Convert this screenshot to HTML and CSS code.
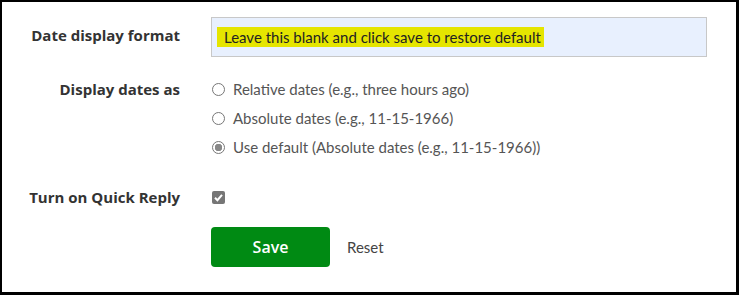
FILE: index.html
```html
<!DOCTYPE html>
<html lang="en">
<head>
    <meta charset="UTF-8">
    <meta name="viewport" content="width=device-width, initial-scale=1.0">
    <title>Preferences</title>
    <link rel="stylesheet" href="styles.css">
</head>
<body>
    <form class="prefs">
        <div class="row">
            <label class="row-label" for="dateformat">Date display format</label>
            <div class="row-field">
                <div class="text-input" id="dateformat"><span class="hint">Leave this blank and click save to restore default</span></div>
            </div>
        </div>
        <div class="row row-dates">
            <span class="row-label">Display dates as</span>
            <div class="row-field options">
                <label class="option"><input type="radio" name="dates"> Relative dates (e.g., three hours ago)</label>
                <label class="option"><input type="radio" name="dates"> Absolute dates (e.g., 11-15-1966)</label>
                <label class="option"><input type="radio" name="dates" checked> Use default (Absolute dates (e.g., 11-15-1966))</label>
            </div>
        </div>
        <div class="row row-check">
            <label class="row-label" for="quickreply">Turn on Quick Reply</label>
            <div class="row-field">
                <input type="checkbox" id="quickreply" checked>
            </div>
        </div>
        <div class="row row-actions">
            <span class="row-label"></span>
            <div class="row-field actions">
                <button type="submit">Save</button>
                <a href="#" class="reset">Reset</a>
            </div>
        </div>
    </form>
</body>
</html>
```

FILE: styles.css
```css
html, body {
    margin: 0;
    height: 100%;
}
body {
    font-family: Lato, "Open Sans", sans-serif;
    color: #333;
    background: #fff;
    box-sizing: border-box;
    border-style: solid;
    border-color: #000;
    border-width: 2px 3px 3px 2px;
}
.prefs {
    display: flex;
    flex-direction: column;
    padding-top: 15px;
}
.row {
    display: grid;
    grid-template-columns: 178px 496px;
    column-gap: 31px;
}
.row-label {
    text-align: right;
    font-family: "Open Sans", sans-serif;
    font-weight: bold;
    font-size: 15px;
    color: #333;
    padding-top: 7px;
    line-height: 22px;
}
.text-input {
    height: 38px;
    border: 1px solid #c8c8c8;
    background: #e8f0fe;
    display: flex;
    align-items: center;
    padding-left: 5px;
}
.hint {
    background: #e5e500;
    color: #222;
    font-size: 15px;
    line-height: 20px;
    padding: 0 3px 0 7px;
}
.row-dates {
    margin-top: 22px;
}
.row-dates .row-label {
    padding-top: 0;
    line-height: 20px;
}
.options {
    display: flex;
    flex-direction: column;
    gap: 9px;
}
.option {
    display: flex;
    align-items: center;
    gap: 8px;
    font-size: 15px;
    color: #555;
    line-height: 20px;
}
input[type="radio"] {
    appearance: none;
    margin: 0 0 0 1px;
    width: 13px;
    height: 13px;
    border: 1px solid #777;
    border-radius: 50%;
    background: #fff;
    box-sizing: border-box;
}
input[type="radio"]:checked {
    background: radial-gradient(circle, #888 0 3.5px, #fff 4px);
}
.row-check {
    margin-top: 30px;
}
.row-check .row-label {
    padding-top: 0;
    line-height: 20px;
}
input[type="checkbox"] {
    appearance: none;
    margin: 4px 0 0 1px;
    width: 13px;
    height: 13px;
    border-radius: 2px;
    background: #767676 url("data:image/svg+xml,%3Csvg xmlns='http://www.w3.org/2000/svg' viewBox='0 0 13 13'%3E%3Cpath d='M3 6.8 5.4 9.2 10 3.8' fill='none' stroke='%23fff' stroke-width='2'/%3E%3C/svg%3E") no-repeat center;
}
.row-actions {
    margin-top: 20px;
}
.actions {
    display: flex;
    align-items: center;
    gap: 17px;
}
button {
    width: 119px;
    height: 40px;
    border: none;
    border-radius: 4px;
    background: #008a13;
    color: #fff;
    font-family: "Open Sans", sans-serif;
    font-size: 16px;
    font-weight: 600;
    cursor: pointer;
}
.reset {
    color: #444;
    font-size: 15px;
    text-decoration: none;
}
```
